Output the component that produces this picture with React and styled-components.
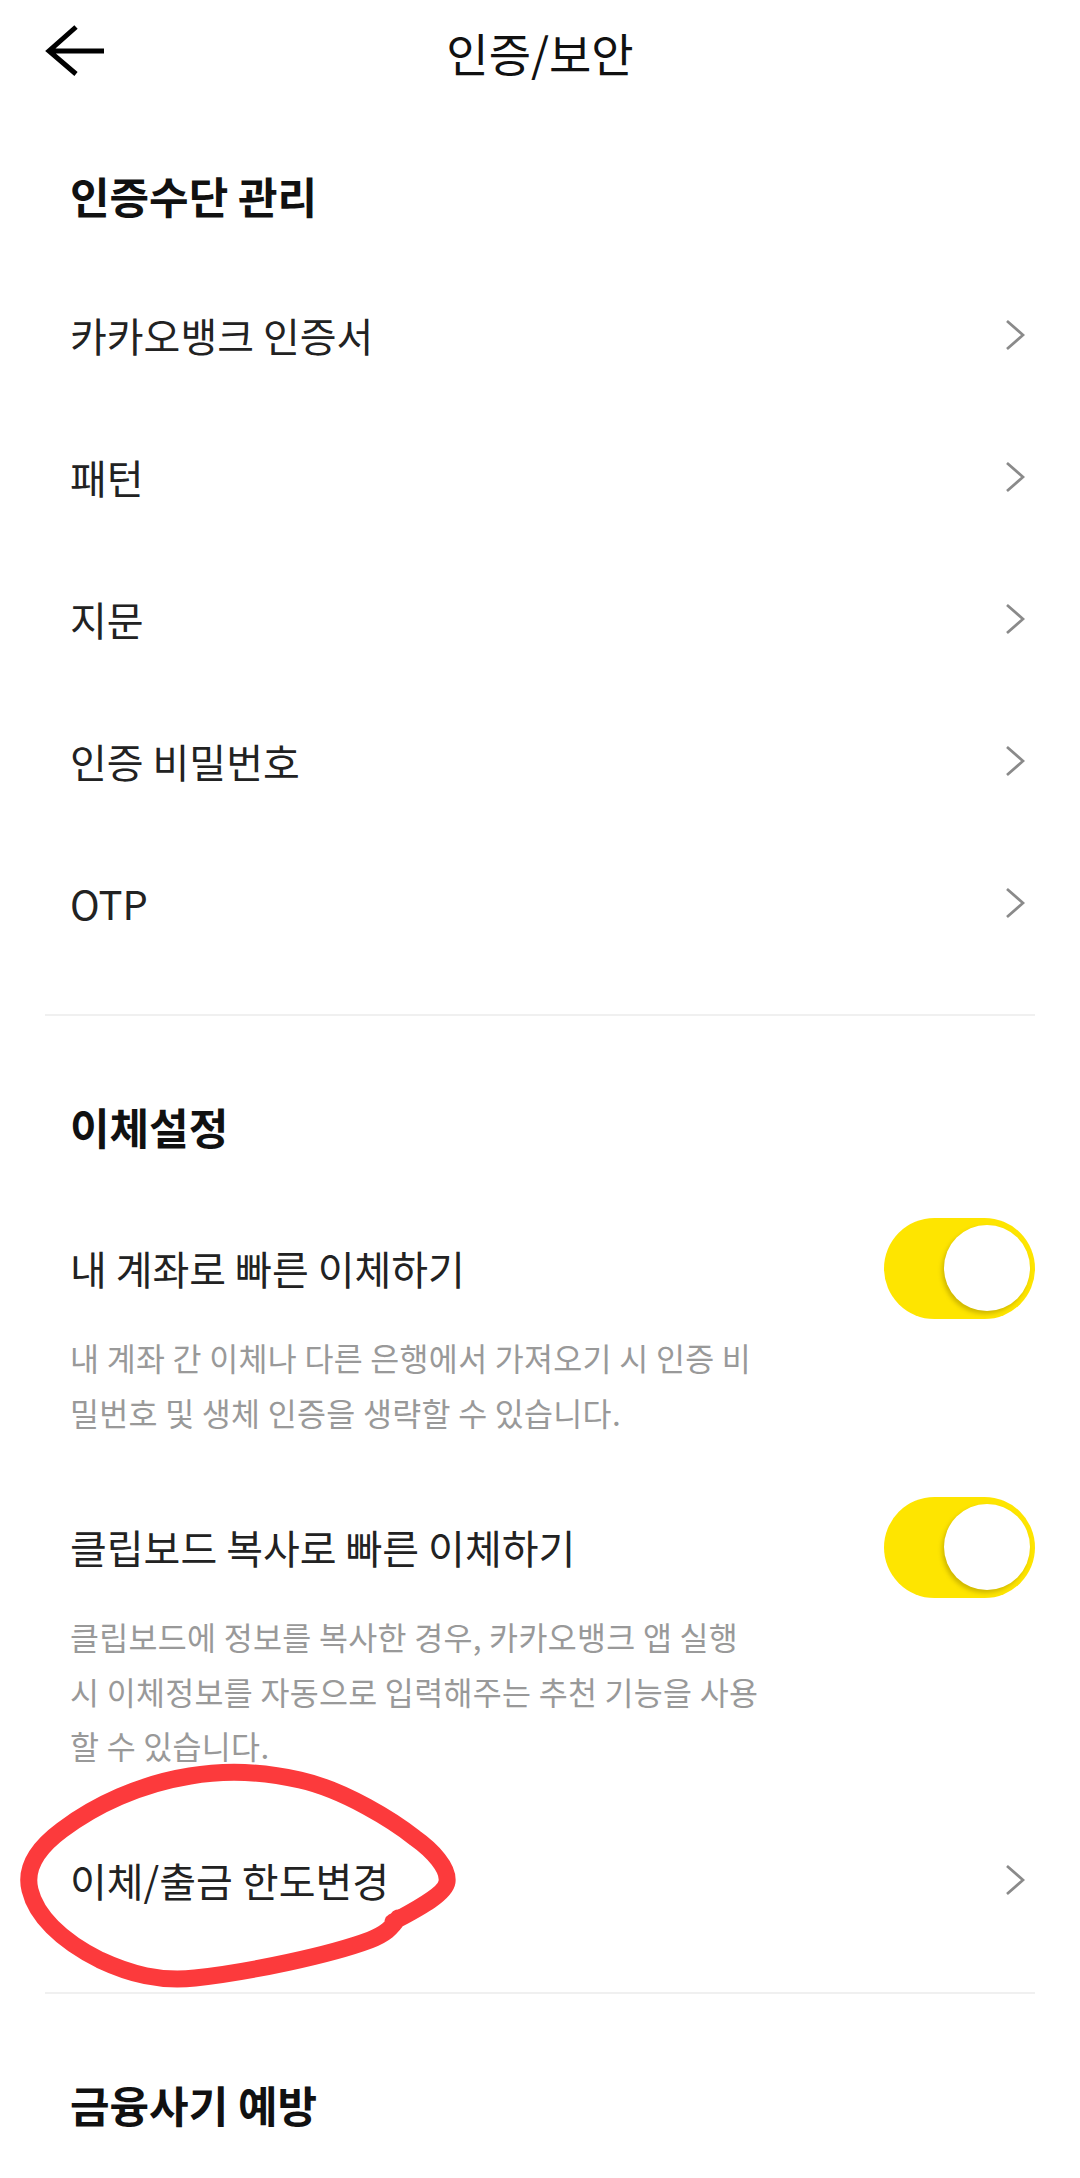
import React from 'react';
import styled, { createGlobalStyle } from 'styled-components';

const GlobalStyle = createGlobalStyle`
  html, body { margin: 0; padding: 0; background: #ffffff; }
  body {
    font-family: "Noto Sans CJK KR", "Noto Sans", sans-serif;
    -webkit-font-smoothing: antialiased;
  }
  * { box-sizing: border-box; }
`;

const Page = styled.div`
  position: relative;
  width: 1080px;
  min-height: 2178px;
  background: #ffffff;
  overflow: hidden;
`;

const Header = styled.header`
  height: 104px;
  display: grid;
  grid-template-columns: 1fr auto 1fr;
  align-items: center;
`;

const BackButton = styled.button`
  justify-self: start;
  margin-left: 44px;
  width: 64px;
  height: 56px;
  padding: 0;
  border: 0;
  background: none;
  display: flex;
  cursor: pointer;
`;

const Title = styled.h1`
  margin: 0;
  font-size: 46px;
  font-weight: 400;
  line-height: 60px;
  color: #111111;
`;

const Section = styled.section`
  padding: 0 45px;
`;

const SectionTitle = styled.h2`
  margin: ${(p) => p.$top}px 0 0;
  padding-left: 25px;
  font-size: 43px;
  font-weight: 700;
  line-height: 60px;
  color: #111111;
`;

const List = styled.ul`
  list-style: none;
  margin: ${(p) => p.$top ?? 40}px 0 0;
  padding: 0;
`;

const Row = styled.li`
  height: 142px;
  display: flex;
  align-items: center;
  justify-content: space-between;
  padding-left: 25px;
  padding-right: ${(p) => (p.$toggle ? 0 : 10)}px;
`;

const Label = styled.span`
  font-size: 40px;
  line-height: 50px;
  color: #222222;
`;

const Desc = styled.p`
  margin: -9px 0 0;
  padding-left: 25px;
  font-size: 31.5px;
  line-height: 54.5px;
  color: #999999;
  letter-spacing: 0.3px;
`;

const Divider = styled.hr`
  margin: ${(p) => p.$top}px 0 0;
  border: 0;
  height: 2px;
  background: #f0f0f0;
`;

const Track = styled.span`
  width: 151px;
  height: 101px;
  border-radius: 51px;
  background: #fee500;
  display: flex;
  align-items: center;
  justify-content: flex-end;
  padding-right: 5px;
  flex-shrink: 0;
`;

const Knob = styled.span`
  width: 86px;
  height: 86px;
  border-radius: 50%;
  background: #ffffff;
  box-shadow: -2px 3px 4px rgba(120, 100, 0, 0.35);
`;

const Annotation = styled.svg`
  position: absolute;
  left: 0;
  top: 1750px;
  width: 500px;
  height: 260px;
  pointer-events: none;
`;

const ArrowIcon = () => (
  <svg width="64" height="56" viewBox="0 0 64 56" fill="none">
    <path
      d="M32 3 L5 27 L32 50 M5 27 H60"
      stroke="#000"
      strokeWidth="5"
      strokeLinecap="butt"
      strokeLinejoin="miter"
    />
  </svg>
);

const Chevron = () => (
  <svg width="20" height="32" viewBox="0 0 20 32" fill="none">
    <path d="M2 2 L18 16 L2 30" stroke="#8a8a8a" strokeWidth="2.7" />
  </svg>
);

const Toggle = () => (
  <Track role="switch" aria-checked="true">
    <Knob />
  </Track>
);

const authItems = ['카카오뱅크 인증서', '패턴', '지문', '인증 비밀번호', 'OTP'];

export default function App() {
  return (
    <Page>
      <GlobalStyle />
      <Header>
        <BackButton aria-label="뒤로">
          <ArrowIcon />
        </BackButton>
        <Title>인증/보안</Title>
        <span />
      </Header>

      <Section>
        <SectionTitle $top={61}>인증수단 관리</SectionTitle>
        <List $top={39}>
          {authItems.map((item) => (
            <Row key={item}>
              <Label>{item}</Label>
              <Chevron />
            </Row>
          ))}
        </List>
        <Divider $top={40} />
      </Section>

      <Section>
        <SectionTitle $top={80}>이체설정</SectionTitle>
        <List $top={41}>
          <Row $toggle>
            <Label>내 계좌로 빠른 이체하기</Label>
            <Toggle />
          </Row>
        </List>
        <Desc>
          내 계좌 간 이체나 다른 은행에서 가져오기 시 인증 비<br />
          밀번호 및 생체 인증을 생략할 수 있습니다.
        </Desc>
        <List $top={37}>
          <Row $toggle>
            <Label>클립보드 복사로 빠른 이체하기</Label>
            <Toggle />
          </Row>
        </List>
        <Desc>
          클립보드에 정보를 복사한 경우, 카카오뱅크 앱 실행<br />
          시 이체정보를 자동으로 입력해주는 추천 기능을 사용<br />
          할 수 있습니다.
        </Desc>
        <List $top={36}>
          <Row>
            <Label>이체/출금 한도변경</Label>
            <Chevron />
          </Row>
        </List>
        <Divider $top={41} />
      </Section>

      <Section>
        <SectionTitle $top={80}>금융사기 예방</SectionTitle>
      </Section>

      <Annotation viewBox="0 0 500 260" fill="none">
        <path
          d="M393 172 C415 160, 445 145, 447 132 C449 118, 432 100, 415 88 C395 72, 345 40, 300 30 C265 22, 225 20, 190 26 C140 34, 95 55, 62 80 C35 100, 25 120, 30 140 C36 165, 60 190, 100 210 C130 224, 160 232, 195 228 C250 222, 330 205, 370 190 C385 184, 392 178, 398 168"
          stroke="#fc3a3c"
          strokeWidth="17"
          strokeLinecap="round"
          strokeLinejoin="round"
        />
      </Annotation>
    </Page>
  );
}
